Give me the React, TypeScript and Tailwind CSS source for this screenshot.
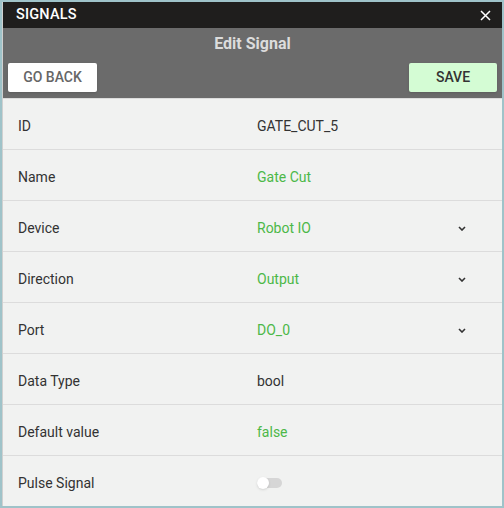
import React from "react";

type Row = { label: string; value?: string; green?: boolean; select?: boolean; toggle?: boolean };

const rows: Row[] = [
  { label: "ID", value: "GATE_CUT_5" },
  { label: "Name", value: "Gate Cut", green: true },
  { label: "Device", value: "Robot IO", green: true, select: true },
  { label: "Direction", value: "Output", green: true, select: true },
  { label: "Port", value: "DO_0", green: true, select: true },
  { label: "Data Type", value: "bool" },
  { label: "Default value", value: "false", green: true },
  { label: "Pulse Signal", toggle: true },
];

function Chevron() {
  return (
    <svg width="8" height="5" viewBox="0 0 8 5" className="text-[#333]">
      <path d="M1 1l3 3 3-3" fill="none" stroke="currentColor" strokeWidth="1.6" />
    </svg>
  );
}

export default function App() {
  return (
    <div className="w-[504px] h-[508px] bg-[#9fc3c9] p-[2px] font-['Roboto','Liberation_Sans',sans-serif]">
      <div className="w-[500px] h-[504px] bg-[#f1f2f1] flex flex-col overflow-hidden border-l border-[#d0d0d0]">
        <div className="h-[26px] bg-[#1f1e1d] flex items-center justify-between pl-[13px] pr-[11px] shrink-0">
          <span className="text-white text-[14.5px] font-medium tracking-[0.2px]">SIGNALS</span>
          <svg width="11" height="11" viewBox="0 0 11 11">
            <path d="M1 1l9 9M10 1l-9 9" stroke="white" strokeWidth="1.5" />
          </svg>
        </div>
        <div className="h-[70px] bg-[#6b6b6b] flex flex-col shrink-0">
          <div className="h-[35px] pb-[4px] flex items-center justify-center text-[#dcdcdc] text-[16px] font-bold">
            Edit Signal
          </div>
          <div className="flex justify-between px-[5px]">
            <button className="w-[89px] h-[29px] bg-white rounded-[2px] text-[#666] text-[14px] font-medium shadow-sm">
              GO BACK
            </button>
            <button className="w-[88px] h-[29px] bg-[#d4fcd4] rounded-[2px] text-[#333] text-[14px] font-medium shadow-sm">
              SAVE
            </button>
          </div>
        </div>
        <div className="flex flex-col border-t border-[#dcdcdc]">
          {rows.map((r) => (
            <div key={r.label} className="h-[51px] pt-[4px] flex items-center border-b border-[#dcdcdc] text-[14px] shrink-0">
              <div className="w-[254px] pl-[15px] text-[#333]">{r.label}</div>
              <div className="flex-1 flex items-center pr-[36px]">
                {r.toggle ? (
                  <div className="w-[25px] h-[10px] rounded-full bg-[#d6d6d6] relative">
                    <div className="absolute left-0 top-[-1px] w-[12px] h-[12px] rounded-full bg-white shadow" />
                  </div>
                ) : (
                  <span className={r.green ? "text-[#4cb848]" : "text-[#333]"}>{r.value}</span>
                )}
                {r.select && (
                  <span className="ml-auto">
                    <Chevron />
                  </span>
                )}
              </div>
            </div>
          ))}
        </div>
      </div>
    </div>
  );
}
